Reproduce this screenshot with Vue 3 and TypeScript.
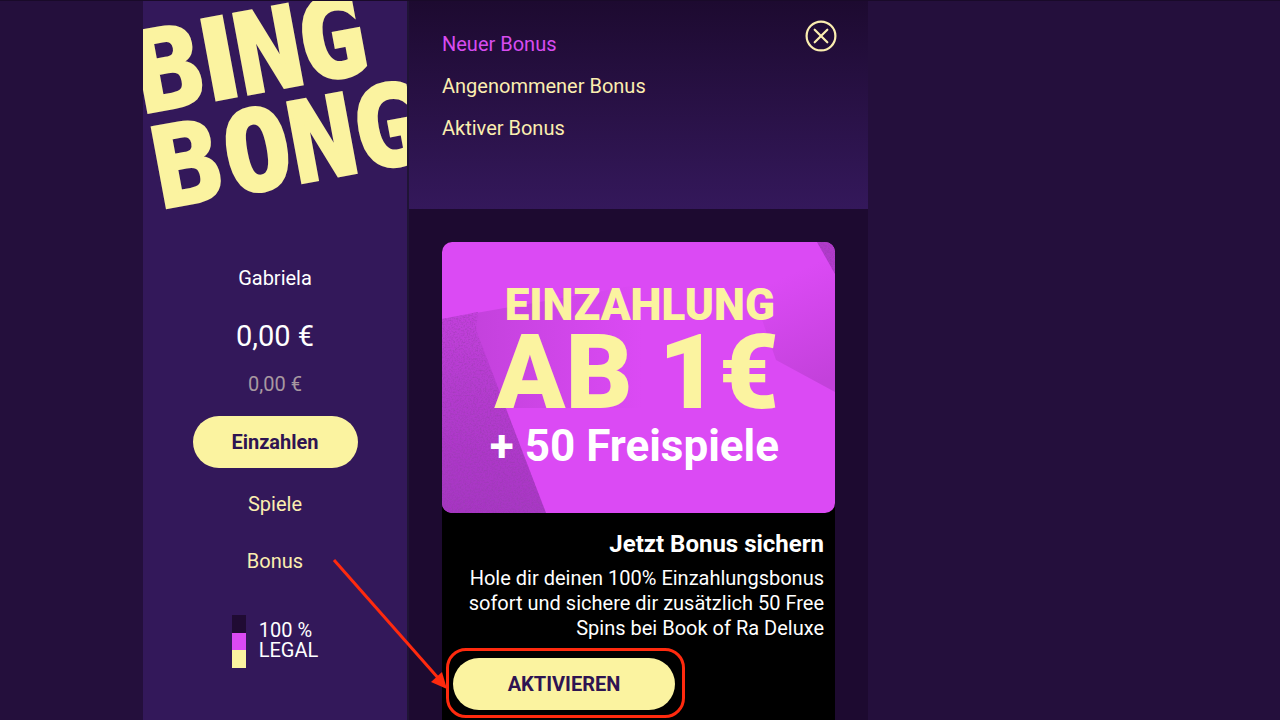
<script setup lang="ts">
interface NavItem {
  label: string
  active: boolean
}

const tabs: NavItem[] = [
  { label: 'Neuer Bonus', active: true },
  { label: 'Angenommener Bonus', active: false },
  { label: 'Aktiver Bonus', active: false },
]

const menu: string[] = ['Spiele', 'Bonus']
</script>

<template>
  <div class="page">
    <aside class="sidebar">
      <svg class="logo" viewBox="0 0 264 220" role="img" aria-label="Bing Bong">
        <g transform="rotate(-10.5)">
          <text y="110"><tspan x="-21">B</tspan><tspan class="slim" x="46">I</tspan><tspan x="81">N</tspan><tspan x="146">G</tspan></text>
          <text y="207"><tspan x="-20">B</tspan><tspan x="52">O</tspan><tspan x="118">N</tspan><tspan x="184">G</tspan></text>
        </g>
      </svg>
      <div class="account">
        <span class="name">Gabriela</span>
        <span class="balance">0,00 €</span>
        <span class="bonus-balance">0,00 €</span>
        <button type="button" class="pill deposit">Einzahlen</button>
      </div>
      <nav class="menu">
        <a v-for="item in menu" :key="item" href="#">{{ item }}</a>
      </nav>
      <div class="legal">
        <span class="flag"><i class="dark"></i><i class="pink"></i><i class="cream"></i></span>
        <span class="legal-text">100 %<br />LEGAL</span>
      </div>
    </aside>

    <main class="panel">
      <header class="panel-head">
        <nav class="tabs">
          <a v-for="tab in tabs" :key="tab.label" href="#" :class="{ active: tab.active }">{{ tab.label }}</a>
        </nav>
        <button type="button" class="close" aria-label="Schließen">
          <svg width="32" height="32" viewBox="0 0 32 32" fill="none" stroke="#fbeeb0" stroke-linecap="round">
            <circle cx="16" cy="16" r="14.4" stroke-width="2.2" />
            <path d="M9.7 9.7 22.3 22.3M22.3 9.7 9.7 22.3" stroke-width="2.2" />
          </svg>
        </button>
      </header>

      <article class="card">
        <div class="banner">
          <svg class="art" viewBox="0 0 393 271" preserveAspectRatio="none" aria-hidden="true">
            <defs>
              <linearGradient id="left" gradientUnits="userSpaceOnUse" x1="10" y1="271" x2="60" y2="60">
                <stop offset="0" stop-color="#a636c2" />
                <stop offset="0.6" stop-color="#b53cd0" />
                <stop offset="1" stop-color="#c743e0" />
              </linearGradient>
              <linearGradient id="wing" gradientUnits="userSpaceOnUse" x1="0" y1="0" x2="200" y2="0">
                <stop offset="0" stop-color="#bf40d8" />
                <stop offset="1" stop-color="#bf40d8" stop-opacity="0" />
              </linearGradient>
              <linearGradient id="corner" gradientUnits="userSpaceOnUse" x1="330" y1="40" x2="375" y2="142">
                <stop offset="0" stop-color="#c341db" stop-opacity="0" />
                <stop offset="1" stop-color="#c341db" />
              </linearGradient>
              <filter id="grain" x="0" y="0" width="1" height="1">
                <feTurbulence type="fractalNoise" baseFrequency="0.6" numOctaves="2" result="n" />
                <feColorMatrix in="n" type="matrix" values="0 0 0 0 0.3  0 0 0 0 0.05  0 0 0 0 0.4  1.4 0 0 0 -0.6" result="g" />
                <feComposite in="g" in2="SourceGraphic" operator="in" result="c" />
                <feMerge>
                  <feMergeNode in="SourceGraphic" />
                  <feMergeNode in="c" />
                </feMerge>
              </filter>
            </defs>
            <rect width="393" height="271" fill="#db4af4" />
            <path d="M0 77 L200 42 V166 H60Z" fill="url(#wing)" />
            <path d="M300 20 H393 V150 L334 118Z" fill="url(#corner)" />
            <path d="M0 77 L36 70 L34 88 L104 271 H0Z" fill="url(#left)" filter="url(#grain)" />
            <path d="M375 0 H393 V32Z" fill="#b13acb" filter="url(#grain)" />
          </svg>
          <div class="offer">
            <span class="line-small">EINZAHLUNG</span>
            <span class="line-big">AB 1€</span>
            <span class="line-white">+ 50 Freispiele</span>
          </div>
        </div>
        <div class="details">
          <h2>Jetzt Bonus sichern</h2>
          <p>Hole dir deinen 100% Einzahlungsbonus sofort und sichere dir zusätzlich 50 Free Spins bei Book of Ra Deluxe</p>
          <div class="action">
            <button type="button" class="pill activate">AKTIVIEREN</button>
            <span class="marker"></span>
            <svg class="arrow" width="116" height="134" viewBox="0 0 116 134" aria-hidden="true">
              <path d="M2 3 107 122" stroke="#ff2a0e" stroke-width="3" />
              <path d="M115 132 99 125 110 115Z" fill="#ff2a0e" />
            </svg>
          </div>
        </div>
      </article>
    </main>
  </div>
</template>

<style>
body {
  margin: 0;
  background: #240f3c;
}
</style>

<style scoped>
.page {
  box-sizing: border-box;
  display: grid;
  grid-template-columns: 143fr 264fr 461fr 412fr;
  height: 100vh;
  overflow: hidden;
  border-top: 1px solid #190a29;
  font-family: Roboto, 'Liberation Sans', sans-serif;
  font-size: 20px;
  line-height: 24px;
  color: #fff;
  background: #240f3c;
}

a {
  color: #fbeeb0;
  text-decoration: none;
}

.sidebar {
  grid-column: 2;
  display: flex;
  flex-direction: column;
  align-items: center;
  overflow: hidden;
  background: #33185a;
}

.logo {
  display: block;
  width: 100%;
  flex-shrink: 0;
}

.logo text {
  font-family: 'DejaVu Sans Mono', monospace;
  font-weight: 700;
  font-size: 110px;
  fill: #fbf3a0;
  stroke: #fbf3a0;
  stroke-width: 4px;
  stroke-linejoin: miter;
}

.logo .slim {
  font-family: 'DejaVu Sans Condensed', 'DejaVu Sans', sans-serif;
  stroke-width: 4px;
}

.account {
  display: flex;
  flex-direction: column;
  align-items: center;
  margin-top: 45px;
}

.balance {
  margin-top: 28px;
  font-size: 29px;
  line-height: 36px;
}

.bonus-balance {
  margin-top: 18px;
  color: #a898a0;
}

.pill {
  height: 52px;
  padding: 0;
  border: 0;
  border-radius: 26px;
  font: inherit;
  font-weight: 700;
  color: #2e1452;
  background: #fbf3a0;
}

.deposit {
  width: 165px;
  margin-top: 20px;
}

.menu {
  display: flex;
  flex-direction: column;
  align-items: center;
  gap: 33px;
  margin-top: 24px;
}

.legal {
  display: flex;
  gap: 13px;
  margin-top: 42px;
  line-height: 20px;
}

.legal-text {
  padding-top: 5px;
}

.flag {
  display: flex;
  flex-direction: column;
  width: 14px;
  height: 53px;
}

.flag i {
  flex: 1;
}

.dark {
  background: #200b33;
}

.pink {
  background: #db4af4;
}

.cream {
  background: #fbf3a0;
}

.panel {
  grid-column: 3;
  border-left: 2px solid #1f1435;
  background: #1d0a30;
}

.panel-head {
  display: flex;
  justify-content: space-between;
  align-items: flex-start;
  box-sizing: border-box;
  height: 208px;
  padding: 19px 31px 0 33px;
  background: linear-gradient(#1d0a30, #34185b);
}

.tabs {
  display: flex;
  flex-direction: column;
  gap: 18px;
  padding-top: 12px;
}

.tabs .active {
  color: #d84cf0;
}

.close {
  display: flex;
  padding: 0;
  border: 0;
  background: none;
}

.card {
  margin: 33px 33px 0;
  min-height: 500px;
  border-radius: 10px 10px 0 0;
  background: #000;
}

.banner {
  position: relative;
  overflow: hidden;
  box-sizing: border-box;
  height: 271px;
  padding: 38px 56px 0 0;
  border-radius: 10px;
}

.art {
  position: absolute;
  inset: 0;
  width: 100%;
  height: 100%;
}

.offer {
  position: relative;
  display: flex;
  flex-direction: column;
  align-items: flex-end;
  white-space: nowrap;
  color: #fbf3a0;
}

.line-small {
  padding-right: 4px;
  font-size: 44px;
  font-weight: 900;
  line-height: 50px;
}

.line-big {
  font-size: 104px;
  font-weight: 900;
  line-height: 86px;
}

.line-white {
  font-size: 44px;
  font-weight: 700;
  line-height: 60px;
  color: #fff;
}

.details {
  padding: 16px 11px 0;
}

h2 {
  margin: 0;
  font-size: 24px;
  line-height: 30px;
  text-align: right;
}

p {
  margin: 7px 0 0;
  line-height: 25px;
  text-align: right;
}

.action {
  position: relative;
  width: 222px;
  margin-top: 17px;
}

.activate {
  display: block;
  width: 100%;
}

.marker {
  position: absolute;
  inset: -10px -10px -8px -7px;
  border: 3px solid #ff2a0e;
  border-radius: 20px;
  pointer-events: none;
}

.arrow {
  position: absolute;
  right: 100%;
  bottom: 19px;
  margin-right: 5px;
  pointer-events: none;
}
</style>
